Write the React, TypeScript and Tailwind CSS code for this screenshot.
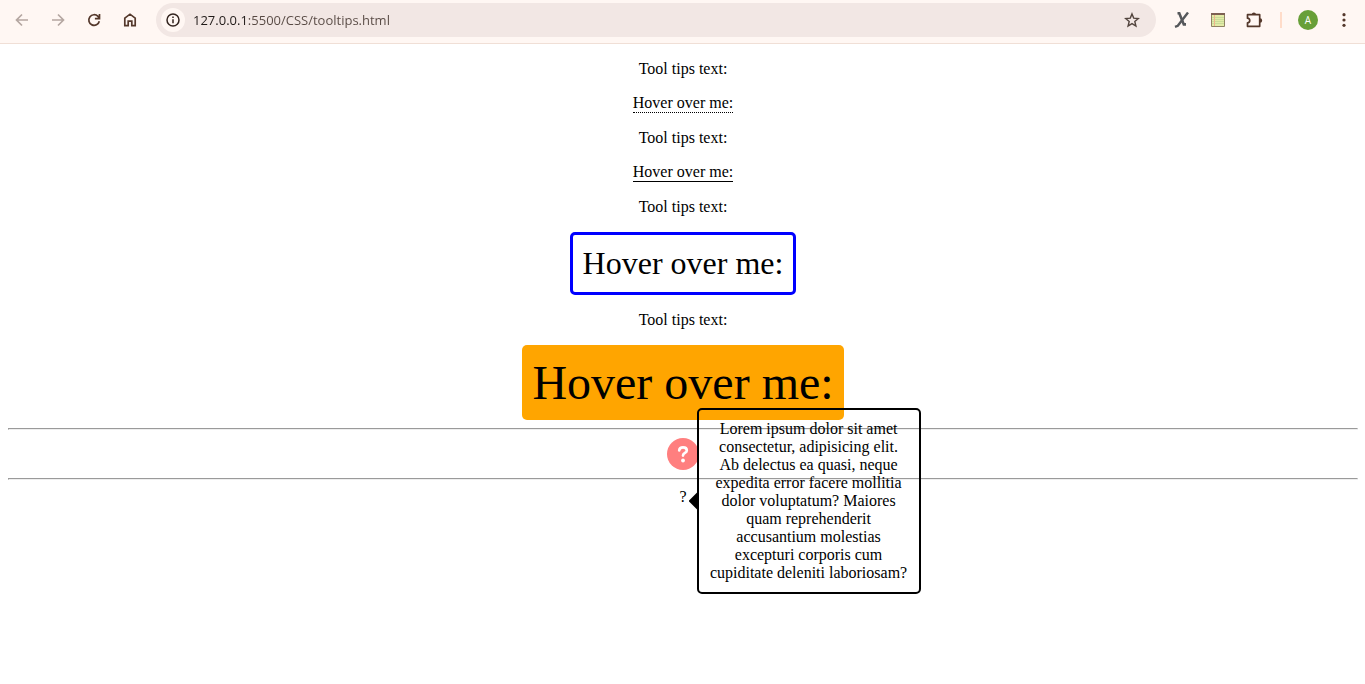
import React from "react";

const iconButton = "flex h-7 w-9 items-center justify-center";

function BrowserBar() {
  return (
    <header className="flex h-11 items-center border-b border-[#f0dfd6] bg-[#fff7f3] pb-[3px] pl-1 pr-[3px] font-['Open_Sans',sans-serif] text-[#54382b]">
      <nav className="flex items-center" aria-label="Browser navigation">
        <button type="button" aria-label="Back" className={iconButton}>
          <svg width="16" height="16" viewBox="0 0 16 16" fill="none" stroke="#b5a7a1" strokeWidth="1.7">
            <path d="M14 8H3M8 2.5 2.5 8 8 13.5" />
          </svg>
        </button>
        <button type="button" aria-label="Forward" className={iconButton}>
          <svg width="16" height="16" viewBox="0 0 16 16" fill="none" stroke="#b5a7a1" strokeWidth="1.7">
            <path d="M2 8h11M8 2.5 13.5 8 8 13.5" />
          </svg>
        </button>
        <button type="button" aria-label="Reload" className={iconButton}>
          <svg width="16" height="16" viewBox="0 0 16 16" fill="none" stroke="currentColor" strokeWidth="1.7">
            <path d="M13.3 9.2A5.3 5.3 0 1 1 12 4.4L13.2 6M13.5 2v4.6H8.9" />
          </svg>
        </button>
        <button type="button" aria-label="Home" className={iconButton}>
          <svg width="16" height="16" viewBox="0 0 16 16" fill="none" stroke="currentColor" strokeWidth="1.7">
            <path d="M2.8 6.2 8 2.2l5.2 4v7.5H9.8V9.2H6.2v4.5H2.8z" />
          </svg>
        </button>
      </nav>
      <div className="ml-2 flex h-[34px] flex-1 items-center rounded-full bg-[#f2e7e4] pl-[5px] pr-4">
        <button type="button" aria-label="Site information" className="flex size-6 items-center justify-center rounded-full bg-[#fff7f3]">
          <svg width="14" height="14" viewBox="0 0 14 14" fill="none" stroke="#33241f" strokeWidth="1.5">
            <circle cx="7" cy="7" r="6" />
            <path d="M7 6.3v4M7 3.5v1.6" />
          </svg>
        </button>
        <input
          type="text"
          aria-label="Address"
          defaultValue="127.0.0.1:5500/CSS/tooltips.html"
          className="ml-2 min-w-0 flex-1 bg-[linear-gradient(to_right,#201a18_54px,#574943_54px)] bg-clip-text text-[13px] leading-5 text-transparent outline-none"
        />
        <button type="button" aria-label="Bookmark this page">
          <svg width="16" height="16" viewBox="0 0 16 16" fill="none" stroke="#52443d" strokeWidth="1.4">
            <path d="m8 1.9 1.7 4.2 4.6.4-3.5 3 1.1 4.5L8 11.6 4.1 14l1.1-4.5-3.5-3 4.6-.4z" />
          </svg>
        </button>
      </div>
      <div className="ml-2 flex items-center">
        <button type="button" aria-label="X extension" className={iconButton}>
          <svg width="16" height="16" viewBox="0 0 16 16" fill="none" stroke="#56585b">
            <path d="M3.500 1.300h1.800L9.800 12.400H12" strokeWidth="2.600" />
            <path d="M14 .500 8.800 7.300 3.800 13.800 1 14.800" strokeWidth="2.400" />
          </svg>
        </button>
        <button type="button" aria-label="Notes extension" className={iconButton}>
          <svg width="14" height="14" viewBox="0 0 14 14">
            <path fill="#e3eba6" stroke="#8f8263" d="M.5.5h13v13H.5z" />
            <path stroke="#c9dc98" d="M1 4.500h12M1 6.500h12M1 8.500h12M1 10.500h12" />
            <path stroke="#7d6052" strokeWidth="2" d="M0 1h14" />
            <path stroke="#efb58c" d="M3.500 2v11" />
          </svg>
        </button>
        <button type="button" aria-label="Extensions" className={iconButton}>
          <svg width="18" height="18" viewBox="0 0 18 18" fill="none" stroke="currentColor" strokeWidth="1.700">
            <path strokeLinejoin="round" d="M2.500 3.700h12.200v11.600H2.500v-3.500c3 0 3-4.600 0-4.600z" />
            <path fill="currentColor" stroke="none" d="M6.800 3.500a2.100 2.100 0 0 1 4.200 0zM15 7.300a2.200 2.200 0 0 1 0 4.400z" />
          </svg>
        </button>
        <span className="ml-2 h-4 w-[2px] bg-[#ffdcc9]" />
        <button type="button" aria-label="Profile A" className="ml-4 flex size-5 items-center justify-center rounded-full bg-[#689f38] text-[10px] leading-3 text-white">
          A
        </button>
        <button type="button" aria-label="Menu" className="ml-2 flex h-7 w-9 items-center justify-center">
          <svg width="16" height="16" viewBox="0 0 16 16" fill="currentColor">
            <circle cx="8" cy="2.700" r="1.600" />
            <circle cx="8" cy="8" r="1.600" />
            <circle cx="8" cy="13.300" r="1.600" />
          </svg>
        </button>
      </div>
    </header>
  );
}

function Rule() {
  return <hr className="my-2 w-full border border-t-[#9a9a9a] border-r-[#eeeeee] border-b-[#eeeeee] border-l-[#9a9a9a]" />;
}

export default function App() {
  return (
    <div className="min-h-screen bg-white">
      <BrowserBar />
      <main className="flex flex-col items-center pl-2 pr-[7px] pt-4 font-['Liberation_Serif',serif] text-base leading-[18px] text-black">
        <div className="flex flex-col items-center gap-4">
          <p>Tool tips text:</p>
          <div className="border-b border-dotted border-black">Hover over me:</div>
          <p>Tool tips text:</p>
          <div className="border-b border-black">Hover over me:</div>
          <p>Tool tips text:</p>
          <div className="rounded-[5px] border-[3px] border-[#0000ff] p-[10px] text-[32px] leading-[37px]">Hover over me:</div>
          <p>Tool tips text:</p>
          <div className="rounded-[5px] bg-[#ffa500] p-[10px] text-5xl leading-[55px]">Hover over me:</div>
        </div>
        <Rule />
        <button type="button" aria-label="Help" className="flex size-8 items-center justify-center rounded-full bg-[#ff7f7f]">
          <svg width="14" height="20" viewBox="0 0 14 20" fill="none" stroke="white" strokeWidth="2.700" strokeLinecap="round">
            <path d="M3.200 6.300C3.500 4 5 3.300 7 3.300c2.300 0 3.800 1.200 3.800 3.100C10.800 9 7 8.900 7 11.600" />
            <circle cx="7" cy="16.500" r="1.900" fill="white" stroke="none" />
          </svg>
        </button>
        <Rule />
        <div className="relative" aria-describedby="help-tip">
          ?
          <div id="help-tip" role="tooltip" className="absolute -top-20 left-full ml-[10px] w-56 rounded-[5px] border-2 border-black p-[10px] text-center">
            <span className="absolute -left-[10px] top-1/2 -mt-[10px] h-5 w-[10px] bg-black [clip-path:polygon(100%_0,100%_100%,0_50%)]" />
            Lorem ipsum dolor sit amet consectetur, adipisicing elit. Ab delectus ea quasi, neque expedita error facere mollitia dolor voluptatum? Maiores quam reprehenderit accusantium molestias excepturi corporis cum cupiditate deleniti laboriosam?
          </div>
        </div>
      </main>
    </div>
  );
}
